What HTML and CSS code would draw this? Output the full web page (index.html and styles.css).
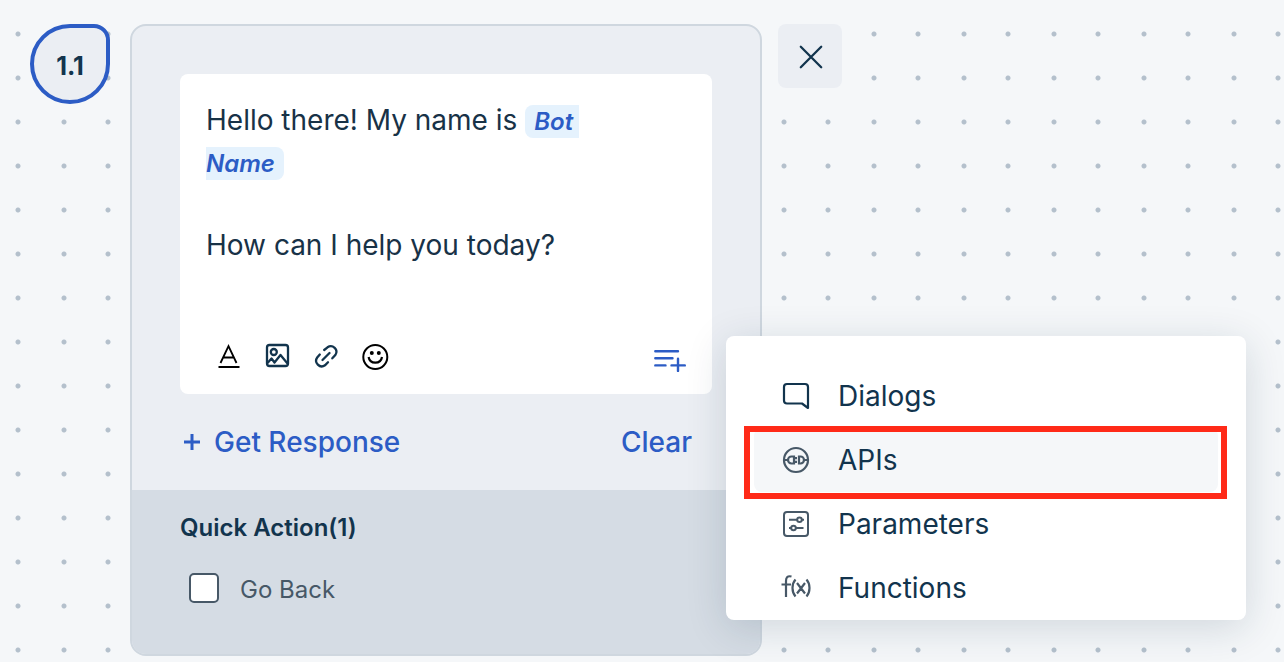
FILE: index.html
```html
<!DOCTYPE html>
<html lang="en">
<head>
<meta charset="utf-8">
<meta name="viewport" content="width=device-width, initial-scale=1">
<title>Dialog builder</title>
<link rel="stylesheet" href="styles.css">
</head>
<body>
<main class="canvas">
  <span class="step">1.1</span>

  <article class="card">
    <section class="card-body">
      <div class="editor">
        <div class="message" contenteditable="true" role="textbox" aria-label="Message" spellcheck="false">
          <p>Hello there! My name is <em class="token">Bot Name</em></p>
          <p><br></p>
          <p>How can I help you today?</p>
        </div>
        <div class="toolbar">
          <button type="button" class="tool" aria-label="Text style">
            <svg width="32" height="32" viewBox="0 0 32 32" fill="none" stroke="#000" stroke-width="2"><path d="M8.500 23L16.500 6L24.500 23M11.500 17.500H21.500" stroke-width="1.800"/><path d="M6.500 27H27.500"/></svg>
          </button>
          <button type="button" class="tool" aria-label="Image">
            <svg width="32" height="32" viewBox="0 0 32 32" fill="none" stroke="#12344d" stroke-width="2.300" stroke-linejoin="round"><rect x="6" y="5" width="21" height="21" rx="2.500"/><circle cx="12.800" cy="12" r="3"/><path d="M6.500 23L10.500 18.500L13.500 22.500L19.500 15L26.500 23.500"/></svg>
          </button>
          <button type="button" class="tool" aria-label="Link">
            <svg width="32" height="32" viewBox="0 0 32 32" fill="none" stroke="#12344d" stroke-width="2.300" stroke-linecap="round"><path d="M12.500 20L19.500 13"/><path d="M14.200 10L17.500 7.300A5.600 5.600 0 0 1 25.300 15.100L22.300 18.300"/><path d="M9.800 14.500L7.200 17.500A5.600 5.600 0 0 0 15 25.300L18 22.300"/></svg>
          </button>
          <button type="button" class="tool" aria-label="Emoji">
            <svg width="32" height="32" viewBox="0 0 32 32" fill="none" stroke="#000" stroke-width="2"><circle cx="16.300" cy="17" r="12"/><circle cx="12.800" cy="13" r="2" fill="#000" stroke="none"/><circle cx="19.800" cy="13" r="2" fill="#000" stroke="none"/><path d="M9.600 17C10.800 24.500 21.800 24.500 23 17" stroke-width="2.200"/></svg>
          </button>
          <button type="button" class="tool insert" aria-label="Insert" aria-expanded="true" aria-controls="insert-menu">
            <svg width="32" height="32" viewBox="0 0 32 32" fill="none" stroke="#2c5cc5" stroke-width="2.400" stroke-linecap="round"><path d="M1.300 11.200H24M1.300 18.300H18.500M1.300 25.400H11.500M17.500 25.400H30.800M24 18.800V31"/></svg>
          </button>
        </div>

        <ul class="menu" id="insert-menu">
          <li><button type="button" class="item">
            <svg width="32" height="32" viewBox="0 0 32 32" fill="none" stroke="#12344d" stroke-width="2.200" stroke-linejoin="round"><path d="M7 4H25Q28 4 28 7V28L22 23.500H7Q4 23.500 4 20.500V7Q4 4 7 4Z"/></svg>
            Dialogs</button></li>
          <li class="marked"><button type="button" class="item active">
            <svg width="32" height="32" viewBox="0 0 32 32" fill="none" stroke="#475867" stroke-width="2.200"><circle cx="16" cy="16" r="12"/><path d="M4 16H8M14 12.500H11.500A3.500 3.500 0 0 0 11.500 19.500H14ZM14 14.200H17M14 17.800H17M19 12.500H20.500A3.500 3.500 0 0 1 20.500 19.500H19ZM24 16H28"/></svg>
            APIs</button></li>
          <li><button type="button" class="item">
            <svg width="32" height="32" viewBox="0 0 32 32" fill="none" stroke="#475867" stroke-width="2"><rect x="4" y="4" width="24" height="24" rx="3"/><path d="M9 11.700H17M22 11.700H24M9 20H11M16 20H23.500"/><circle cx="19.500" cy="11.700" r="2.300"/><circle cx="13.500" cy="20" r="2.300"/></svg>
            Parameters</button></li>
          <li><button type="button" class="item">
            <svg width="32" height="32" viewBox="0 0 32 32" fill="none" stroke="#475867" stroke-width="2.200"><path d="M11.500 4.500C7.500 3.500 6 5.500 6 9V25M1.500 12.500H11M15.500 7.500C11.500 12 11.500 20 15.500 24.500M26.500 7.500C30.500 12 30.500 20 26.500 24.500M17 11L25 21.500M25 11L17 21.500"/></svg>
            Functions</button></li>
        </ul>
      </div>
      <div class="actions">
        <button type="button" class="text-button">
          <svg width="24" height="24" viewBox="0 0 24 24" fill="none" stroke="#2c5cc5" stroke-width="3"><path d="M4 12H20M12 4V20"/></svg>
          Get Response</button>
        <button type="button" class="text-button">Clear</button>
      </div>
    </section>
    <section class="quick">
      <h2 class="quick-title">Quick Action(1)</h2>
      <label class="option"><input type="checkbox" class="check"><span class="option-text">Go Back</span></label>
    </section>
  </article>

  <button type="button" class="close" aria-label="Close">
    <svg width="32" height="32" viewBox="0 0 32 32" fill="none" stroke="#12344d" stroke-width="2.300" stroke-linecap="round"><path d="M6.800 6.800L27.200 27.200M27.200 6.800L6.800 27.200"/></svg>
  </button>
</main>
</body>
</html>
```

FILE: styles.css
```css
* {
  box-sizing: border-box;
}

body {
  margin: 0;
  color: #12344d;
  font-family: Inter, "Liberation Sans", sans-serif;
  font-size: 28px;
}

button {
  padding: 0;
  border: 0;
  background: none;
  color: inherit;
  font: inherit;
  cursor: pointer;
}

svg {
  display: block;
  flex: none;
}

/* Two dots per tile: columns alternate between 46px and 44px apart. */
.canvas {
  display: flex;
  align-items: flex-start;
  min-height: 100vh;
  padding: 24px 30px 6px;
  overflow: hidden;
  background-color: #f5f7f9;
  background-image:
    radial-gradient(circle at 18px 34px, #b4c0cc 2px, transparent 3px),
    radial-gradient(circle at 64px 34px, #b4c0cc 2px, transparent 3px);
  background-size: 90px 44px;
}

.step {
  display: flex;
  flex: none;
  align-items: center;
  justify-content: center;
  width: 80px;
  height: 80px;
  margin-right: 20px;
  padding-top: 3px;
  border: 4px solid #2c5cc5;
  border-radius: 40px 16px 40px 40px;
  background: #ebeef3;
  font-size: 25px;
  font-weight: 700;
}

.card {
  flex: 0 1 632px;
  min-width: 0;
  border: 2px solid #cfd7df;
  border-radius: 16px;
  background: #ebeef3;
}

.card-body {
  padding: 48px 48px 0;
}

.editor {
  position: relative;
  display: flex;
  flex-direction: column;
  min-height: 320px;
  border-radius: 8px;
  background: #fff;
}

.message {
  flex: 1;
  padding: 26px 80px 0 26px;
  color: #183247;
  line-height: 41px;
  outline: none;
}

.message p {
  margin: 0;
}

/* The space at a line end keeps its background. */
.token {
  padding: 2px 9px;
  border-radius: 8px;
  background: #e5f2fd;
  color: #2c5cc5;
  font-size: 24px;
  font-weight: 600;
  white-space: break-spaces;
}

.toolbar {
  display: flex;
  gap: 17px;
  padding: 0 26px 22px 32px;
}

.insert {
  margin-left: auto;
}

.actions {
  display: flex;
  align-items: center;
  justify-content: space-between;
  height: 96px;
  padding-right: 20px;
}

.text-button {
  display: flex;
  align-items: center;
  gap: 10px;
  color: #2c5cc5;
  font-weight: 500;
}

.quick {
  min-height: 164px;
  padding: 22px 48px;
  border-radius: 0 0 14px 14px;
  background: #d5dce4;
  font-size: 24px;
}

.quick-title {
  margin: 0;
  font-size: 24px;
  font-weight: 600;
  line-height: 32px;
}

.option {
  display: flex;
  align-items: center;
  gap: 21px;
  margin-top: 26px;
  padding-left: 9px;
  color: #475867;
  line-height: 32px;
}

.option-text {
  padding-top: 4px;
}

.check {
  width: 30px;
  height: 30px;
  margin: 0;
  border: 2px solid #475867;
  border-radius: 5px;
  background: #fff;
  appearance: none;
}

.check:checked {
  background: #2c5cc5;
}

.close {
  display: grid;
  flex: none;
  place-items: center;
  width: 64px;
  height: 64px;
  margin-left: 16px;
  border-radius: 8px;
  background: #ebeef3;
}

.menu {
  position: absolute;
  z-index: 1;
  top: calc(100% - 58px);
  left: calc(100% + 14px);
  width: 520px;
  margin: 0;
  padding: 28px 28px 0;
  border-radius: 8px;
  background: #fff;
  box-shadow: 0 8px 40px rgba(18, 52, 77, 0.16);
  list-style: none;
}

.item {
  display: flex;
  align-items: center;
  gap: 26px;
  width: 100%;
  height: 64px;
  padding: 0 26px;
  border-radius: 8px;
  text-align: left;
}

.item.active {
  background: #f5f7f9;
}

.marked {
  position: relative;
}

.marked::after {
  position: absolute;
  inset: -2px -9px -7px -10px;
  border: 6px solid #ff2a18;
  content: "";
  pointer-events: none;
}
```
